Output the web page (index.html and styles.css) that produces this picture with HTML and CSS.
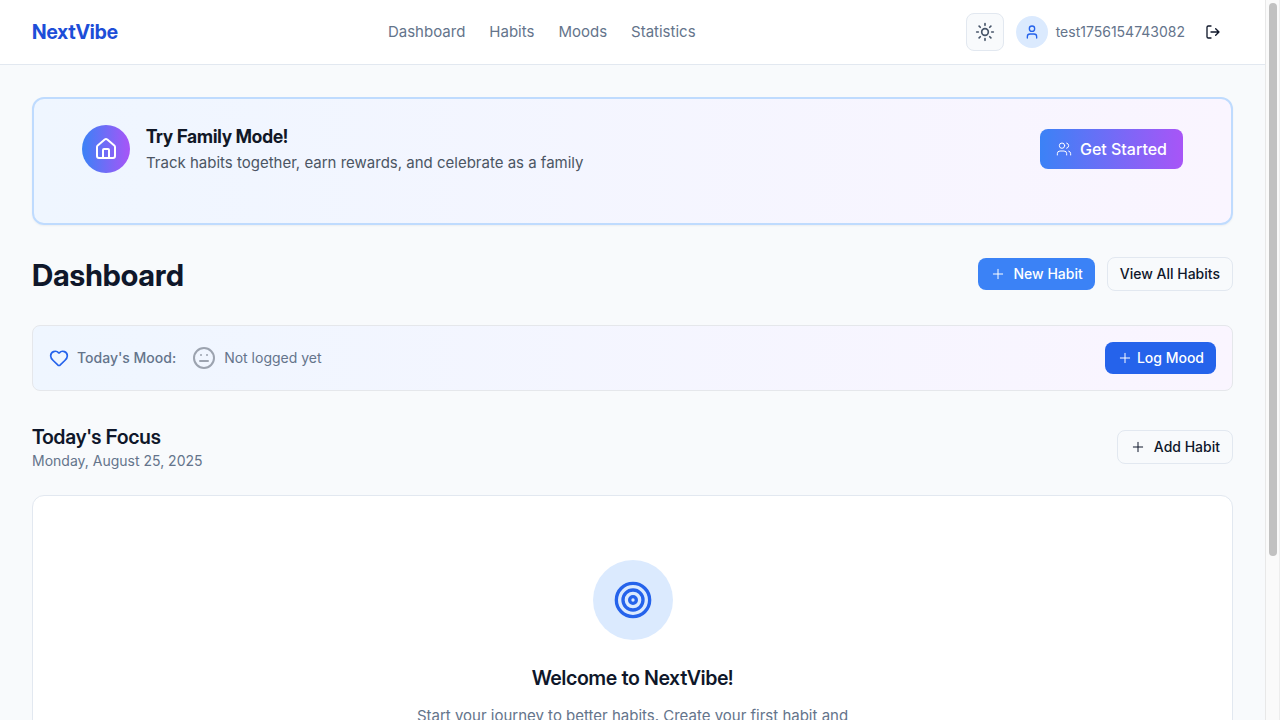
FILE: index.html
```html
<!DOCTYPE html>
<html lang="en">
<head>
<meta charset="utf-8">
<meta name="viewport" content="width=device-width, initial-scale=1">
<title>NextVibe</title>
<link rel="stylesheet" href="styles.css">
</head>
<body>
<div class="page">
  <header class="topbar">
    <a class="brand" href="#">NextVibe</a>
    <nav class="nav">
      <a href="#">Dashboard</a>
      <a href="#">Habits</a>
      <a href="#">Moods</a>
      <a href="#">Statistics</a>
    </nav>
    <div class="account">
      <button class="theme-toggle" type="button" aria-label="Toggle theme">
        <svg class="icon icon-md" viewBox="0 0 24 24"><circle cx="12" cy="12" r="4"/><path d="M12 2v2M12 20v2M4.93 4.93l1.41 1.41M17.66 17.66l1.41 1.41M2 12h2M20 12h2M6.34 17.66l-1.41 1.41M19.07 4.93l-1.41 1.41"/></svg>
      </button>
      <div class="user">
        <span class="avatar"><svg class="icon icon-sm" viewBox="0 0 24 24"><path d="M19 21v-2a4 4 0 0 0-4-4H9a4 4 0 0 0-4 4v2"/><circle cx="12" cy="7" r="4"/></svg></span>
        <span class="username">test1756154743082</span>
        <button class="logout" type="button" aria-label="Log out">
          <svg class="icon icon-sm" viewBox="0 0 24 24"><path d="M9 21H5a2 2 0 0 1-2-2V5a2 2 0 0 1 2-2h4M16 17l5-5-5-5M21 12H9"/></svg>
        </button>
      </div>
    </div>
  </header>

  <main class="content">
    <section class="family">
      <div class="family-info">
        <span class="family-icon"><svg class="icon icon-lg" viewBox="0 0 24 24"><path d="M15 21v-8a1 1 0 0 0-1-1h-4a1 1 0 0 0-1 1v8"/><path d="M3 10a2 2 0 0 1 .709-1.528l7-5.999a2 2 0 0 1 2.582 0l7 5.999A2 2 0 0 1 21 10v9a2 2 0 0 1-2 2H5a2 2 0 0 1-2-2z"/></svg></span>
        <div>
          <h3 class="family-title">Try Family Mode!</h3>
          <p class="family-text">Track habits together, earn rewards, and celebrate as a family</p>
        </div>
      </div>
      <button class="btn btn-gradient" type="button">
        <svg class="icon icon-sm" viewBox="0 0 24 24"><path d="M16 21v-2a4 4 0 0 0-4-4H6a4 4 0 0 0-4 4v2"/><circle cx="9" cy="7" r="4"/><path d="M22 21v-2a4 4 0 0 0-3-3.87M16 3.13a4 4 0 0 1 0 7.75"/></svg>
        Get Started
      </button>
    </section>

    <div class="heading">
      <h1 class="title">Dashboard</h1>
      <div class="actions">
        <button class="btn btn-primary" type="button">
          <svg class="icon icon-sm" viewBox="0 0 24 24"><path d="M5 12h14M12 5v14"/></svg>
          New Habit
        </button>
        <button class="btn btn-outline" type="button">View All Habits</button>
      </div>
    </div>

    <section class="mood">
      <div class="mood-info">
        <div class="mood-label">
          <svg class="icon icon-md" viewBox="0 0 24 24"><path d="M2 9.5a5.5 5.5 0 0 1 9.591-3.676.56.56 0 0 0 .818 0A5.49 5.49 0 0 1 22 9.5c0 2.29-1.5 4-3 5.5l-5.492 5.313a2 2 0 0 1-3 .019L5 15c-1.5-1.5-3-3.2-3-5.5"/></svg>
          <span>Today's Mood:</span>
        </div>
        <div class="mood-value">
          <svg class="icon icon-lg" viewBox="0 0 24 24"><circle cx="12" cy="12" r="10"/><path d="M8 15h8M9 9h.01M15 9h.01"/></svg>
          <span>Not logged yet</span>
        </div>
      </div>
      <button class="btn btn-log" type="button">
        <svg class="icon icon-sm" viewBox="0 0 24 24"><path d="M5 12h14M12 5v14"/></svg>
        Log Mood
      </button>
    </section>

    <div class="focus-head">
      <div>
        <h2 class="focus-title">Today's Focus</h2>
        <p class="focus-date">Monday, August 25, 2025</p>
      </div>
      <button class="btn btn-outline" type="button">
        <svg class="icon icon-sm" viewBox="0 0 24 24"><path d="M5 12h14M12 5v14"/></svg>
        Add Habit
      </button>
    </div>

    <section class="welcome">
      <span class="welcome-icon"><svg class="icon icon-xl" viewBox="0 0 24 24"><circle cx="12" cy="12" r="10"/><circle cx="12" cy="12" r="6"/><circle cx="12" cy="12" r="2"/></svg></span>
      <h3 class="welcome-title">Welcome to NextVibe!</h3>
      <p class="welcome-text">Start your journey to better habits. Create your first habit and</p>
    </section>
  </main>
</div>
<div class="scrollbar" aria-hidden="true"><div class="thumb"></div></div>
</body>
</html>
```

FILE: styles.css
```css
* {
  box-sizing: border-box;
}

body {
  margin: 0;
  display: flex;
  height: 100vh;
  overflow: hidden;
  background: #f8fafc;
  color: #0f172a;
  font-family: Inter, "Liberation Sans", sans-serif;
  font-size: 15px;
  line-height: 24px;
}

h1, h2, h3, p {
  margin: 0;
}

h1, h2, h3, .brand {
  font-family: "Inter Display", Inter, "Liberation Sans", sans-serif;
}

a {
  color: inherit;
  text-decoration: none;
}

button {
  font: inherit;
  color: inherit;
  cursor: pointer;
}

.page {
  flex: 1;
  min-width: 0;
  overflow: hidden;
}

.scrollbar {
  width: 15px;
  padding: 3px;
  background: #fafafa;
  border-left: 1px solid #e8e8e8;
  border-right: 1px solid #ededed;
}

.thumb {
  width: 8px;
  height: 77.5%;
  border-radius: 4px;
  background: #c1c1c1;
}

.icon {
  flex: none;
  fill: none;
  stroke: currentColor;
  stroke-width: 2;
  stroke-linecap: round;
  stroke-linejoin: round;
}

.icon-sm { width: 16px; height: 16px; }
.icon-md { width: 20px; height: 20px; }
.icon-lg { width: 24px; height: 24px; }
.icon-xl { width: 40px; height: 40px; }

.topbar {
  display: flex;
  align-items: center;
  justify-content: space-between;
  height: 65px;
  padding: 0 32px;
  background: #fff;
  border-bottom: 1px solid #e2e8f0;
}

.brand {
  color: #1d4ed8;
  font-size: 20px;
  font-weight: 700;
  line-height: 28px;
}

.nav {
  display: flex;
  gap: 24px;
  color: #64748b;
}

.account {
  display: flex;
  align-items: center;
  gap: 12px;
}

.theme-toggle {
  display: grid;
  padding: 8px;
  color: #475569;
  background: #f8fafc;
  border: 1px solid #e2e8f0;
  border-radius: 8px;
}

.user {
  display: flex;
  align-items: center;
  gap: 8px;
}

.avatar {
  display: grid;
  place-items: center;
  width: 32px;
  height: 32px;
  border-radius: 50%;
  background: #dbeafe;
  color: #2563eb;
}

.username {
  color: #64748b;
  font-size: 14px;
  line-height: 20px;
}

.logout {
  display: grid;
  padding: 8px 12px;
  background: none;
  border: 0;
}

.content {
  display: flex;
  flex-direction: column;
  gap: 32px;
  padding: 32px;
}

.family {
  display: flex;
  align-items: center;
  justify-content: space-between;
  padding: 24px 48px 48px;
  border: 2px solid #bfdbfe;
  border-radius: 12px;
  background: linear-gradient(to right, #eff6ff, #faf5ff);
  box-shadow: 0 1px 2px rgba(0, 0, 0, 0.05);
}

.family-info {
  display: flex;
  align-items: center;
  gap: 16px;
}

.family-icon {
  display: grid;
  place-items: center;
  width: 48px;
  height: 48px;
  border-radius: 50%;
  background: linear-gradient(to right, #3b82f6, #a855f7);
  color: #fff;
}

.family-title {
  color: #111827;
  font-size: 18px;
  font-weight: 700;
  line-height: 28px;
}

.family-text {
  color: #4b5563;
}

.btn {
  display: flex;
  align-items: center;
  gap: 8px;
  padding: 6px 12px;
  border: 0;
  border-radius: 8px;
  font-size: 14px;
  font-weight: 500;
  line-height: 20px;
  white-space: nowrap;
}

.btn .icon {
  stroke-width: 1.5;
}

.btn-gradient {
  padding: 8px 16px;
  background: linear-gradient(to right, #3b82f6, #a855f7);
  color: #fff;
  font-size: 16px;
  line-height: 24px;
}

.btn-primary {
  background: #3b82f6;
  color: #fff;
}

.btn-outline {
  border: 1px solid #e2e8f0;
  background: transparent;
}

.btn-log {
  gap: 4px;
  background: #2563eb;
  color: #fff;
}

.heading {
  display: flex;
  align-items: flex-start;
  justify-content: space-between;
}

.title {
  font-size: 30px;
  font-weight: 700;
  line-height: 36px;
}

.actions {
  display: flex;
  align-items: center;
  gap: 12px;
}

.mood {
  display: flex;
  align-items: center;
  justify-content: space-between;
  padding: 16px;
  border: 1px solid #e5e7eb;
  border-radius: 8px;
  background: linear-gradient(to right, #eff6ff, #faf5ff);
  color: #64748b;
  font-size: 14px;
  line-height: 20px;
}

.mood-info {
  display: flex;
  align-items: center;
  gap: 16px;
}

.mood-label,
.mood-value {
  display: flex;
  align-items: center;
  gap: 8px;
}

.mood-label {
  font-weight: 500;
}

.mood-label .icon {
  color: #2563eb;
}

.mood-value .icon {
  color: #9ca3af;
}

.focus-head {
  display: flex;
  align-items: center;
  justify-content: space-between;
}

.focus-title {
  font-size: 20px;
  font-weight: 600;
  line-height: 28px;
}

.focus-date {
  color: #64748b;
  font-size: 14px;
  line-height: 20px;
}

.welcome {
  display: flex;
  flex-direction: column;
  align-items: center;
  margin-top: -8px;
  padding: 64px 32px;
  background: #fff;
  border: 1px solid #e2e8f0;
  border-radius: 12px;
  text-align: center;
}

.welcome-icon {
  display: grid;
  place-items: center;
  width: 80px;
  height: 80px;
  margin-bottom: 24px;
  border-radius: 50%;
  background: #dbeafe;
  color: #2563eb;
}

.welcome-title {
  margin-bottom: 12px;
  font-size: 20px;
  font-weight: 600;
  line-height: 28px;
}

.welcome-text {
  max-width: 448px;
  color: #64748b;
}
```
